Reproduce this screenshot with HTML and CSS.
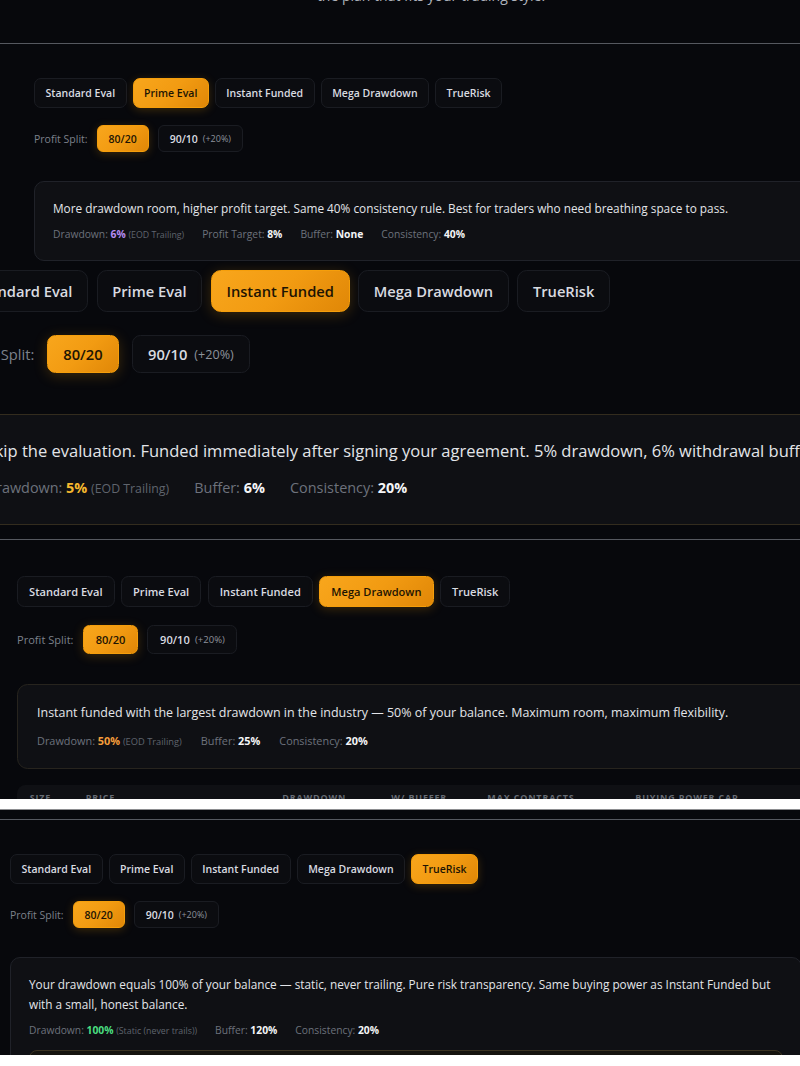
FILE: index.html
```html
<!DOCTYPE html>
<html lang="en">
<head>
<meta charset="utf-8">
<title>Plans</title>
<link rel="stylesheet" href="styles.css">
</head>
<body>
<main class="collage">

  <section class="shot shot-a">
    <p class="intro">the plan that fits your trading style.</p>
    <div class="plans plans-a">
      <div class="tabs">
        <span class="tab">Standard Eval</span>
        <span class="tab is-active">Prime Eval</span>
        <span class="tab">Instant Funded</span>
        <span class="tab">Mega Drawdown</span>
        <span class="tab">TrueRisk</span>
      </div>
      <div class="split">
        <span class="split-label">Profit Split:</span>
        <span class="chip is-active">80/20</span>
        <span class="chip">90/10 <small>(+20%)</small></span>
      </div>
      <div class="card">
        <p class="card-text">More drawdown room, higher profit target. Same 40% consistency rule. Best for traders who need breathing space to pass.</p>
        <div class="stats">
          <span>Drawdown: <b class="v-purple">6%</b> <small>(EOD Trailing)</small></span>
          <span>Profit Target: <b>8%</b></span>
          <span>Buffer: <b>None</b></span>
          <span>Consistency: <b>40%</b></span>
        </div>
      </div>
    </div>
  </section>

  <section class="shot shot-b">
    <div class="plans plans-b">
      <div class="tabs">
        <span class="tab">Standard Eval</span>
        <span class="tab">Prime Eval</span>
        <span class="tab is-active">Instant Funded</span>
        <span class="tab">Mega Drawdown</span>
        <span class="tab">TrueRisk</span>
      </div>
      <div class="split">
        <span class="split-label">Profit Split:</span>
        <span class="chip is-active">80/20</span>
        <span class="chip">90/10 <small>(+20%)</small></span>
      </div>
      <div class="card card-amber card-wide">
        <p class="card-text">Skip the evaluation. Funded immediately after signing your agreement. 5% drawdown, 6% withdrawal buffer.</p>
        <div class="stats">
          <span>Drawdown: <b class="v-amber">5%</b> <small>(EOD Trailing)</small></span>
          <span>Buffer: <b>6%</b></span>
          <span>Consistency: <b>20%</b></span>
        </div>
      </div>
    </div>
  </section>

  <section class="shot shot-c">
    <div class="plans plans-c">
      <div class="tabs">
        <span class="tab">Standard Eval</span>
        <span class="tab">Prime Eval</span>
        <span class="tab">Instant Funded</span>
        <span class="tab is-active">Mega Drawdown</span>
        <span class="tab">TrueRisk</span>
      </div>
      <div class="split">
        <span class="split-label">Profit Split:</span>
        <span class="chip is-active">80/20</span>
        <span class="chip">90/10 <small>(+20%)</small></span>
      </div>
      <div class="card card-warm">
        <p class="card-text">Instant funded with the largest drawdown in the industry — 50% of your balance. Maximum room, maximum flexibility.</p>
        <div class="stats">
          <span>Drawdown: <b class="v-orange">50%</b> <small>(EOD Trailing)</small></span>
          <span>Buffer: <b>25%</b></span>
          <span>Consistency: <b>20%</b></span>
        </div>
      </div>
      <div class="table-head">
        <span>Size</span>
        <span>Price</span>
        <span>Drawdown</span>
        <span>W/ Buffer</span>
        <span>Max Contracts</span>
        <span>Buying Power Cap</span>
      </div>
    </div>
  </section>

  <div class="band"></div>

  <section class="shot shot-d">
    <div class="plans plans-d">
      <div class="tabs">
        <span class="tab">Standard Eval</span>
        <span class="tab">Prime Eval</span>
        <span class="tab">Instant Funded</span>
        <span class="tab">Mega Drawdown</span>
        <span class="tab is-active">TrueRisk</span>
      </div>
      <div class="split">
        <span class="split-label">Profit Split:</span>
        <span class="chip is-active">80/20</span>
        <span class="chip">90/10 <small>(+20%)</small></span>
      </div>
      <div class="card card-d">
        <p class="card-text">Your drawdown equals 100% of your balance — static, never trailing. Pure risk transparency. Same buying power as Instant Funded but with a small, honest balance.</p>
        <div class="stats">
          <span>Drawdown: <b class="v-green">100%</b> <small>(Static (never trails))</small></span>
          <span>Buffer: <b>120%</b></span>
          <span>Consistency: <b>20%</b></span>
        </div>
        <div class="note"></div>
      </div>
    </div>
  </section>

</main>
</body>
</html>
```

FILE: styles.css
```css
* { box-sizing: border-box; }

html, body {
  margin: 0;
  padding: 0;
  background: #ffffff;
}

body {
  font-family: "Open Sans", "Noto Sans", "DejaVu Sans", sans-serif;
  width: 800px;
  height: 1066px;
  overflow: hidden;
}

.collage {
  display: flex;
  flex-direction: column;
}

.shot {
  background: #07080c;
  overflow: hidden;
  flex: none;
}

.shot-a { height: 262px; }
.shot-b { height: 277px; }
.shot-c { height: 260px; border-top: 1px solid #55585f; }
.shot-d {
  height: 245px;
  background:
    linear-gradient(#55585f, #55585f) 0 9px / 100% 1px no-repeat,
    #07080c;
}

.band {
  height: 11px;
  background: #ffffff;
  border-bottom: 1px solid #8c8d90;
  flex: none;
}

.intro {
  margin: -14px 0 0;
  padding: 0 0 37px 62px;
  line-height: 20px;
  font-size: 14px;
  text-align: center;
  color: #aeb3bc;
  border-bottom: 1px solid #55585f;
}

.plans {
  width: 1100px;
}

.plans-a { padding: 34px 0 0 34px; }

.plans-b {
  zoom: 1.4;
  padding-top: 5.4px;
  margin-left: -29px;
}

.plans-c {
  zoom: 1.057;
  padding: 33.6px 0 0 16.1px;
}

.plans-d { padding: 44px 0 0 10px; }

.tabs {
  display: flex;
  gap: 6px;
}

.tab {
  height: 30px;
  padding: 0 10.5px;
  display: flex;
  align-items: center;
  border: 1px solid #1a1c22;
  background: #0b0c10;
  border-radius: 7px;
  font-size: 10.5px;
  font-weight: 600;
  color: #d9dbe0;
  white-space: nowrap;
}

.tab.is-active,
.chip.is-active {
  background: linear-gradient(135deg, #f8a61c 0%, #f29b12 50%, #e08707 100%);
  border-color: #f59e0b;
  color: #1d1403;
  box-shadow: 0 2px 10px rgba(245, 158, 11, 0.22);
}

.split {
  display: flex;
  align-items: center;
  gap: 9px;
  margin-top: 17px;
}

.split-label {
  font-size: 10.5px;
  color: #7c818b;
}

.chip {
  height: 27px;
  padding: 0 11px;
  display: flex;
  align-items: center;
  gap: 5px;
  border: 1px solid #1a1c22;
  background: #0b0c10;
  border-radius: 6px;
  font-size: 10.5px;
  font-weight: 600;
  color: #d9dbe0;
  white-space: nowrap;
}

.chip small {
  font-size: 9px;
  font-weight: 400;
  color: #8d929b;
}

.card {
  margin-top: 29px;
  width: 783px;
  padding: 16px 18px;
  border: 1px solid #202229;
  background: #0f1014;
  border-radius: 10px;
}

.card-d { width: 792px; }
.card-wide { width: 900px; }

.card-amber { border-color: #332c1e; }
.card-warm { border-color: #27241e; }

.card-text {
  margin: 0;
  font-size: 11.8px;
  line-height: 20px;
  color: #e3e5e9;
}

.card-wide .card-text { white-space: nowrap; }

.stats {
  display: flex;
  gap: 18px;
  margin-top: 8px;
  font-size: 10.3px;
  line-height: 17px;
  color: #6d727c;
  white-space: nowrap;
}

.stats b {
  font-weight: 700;
  color: #f4f5f7;
}

.stats small {
  font-size: 8.8px;
  color: #5f646d;
}

.stats .v-purple { color: #b48cf2; }
.stats .v-amber { color: #f5b82e; }
.stats .v-orange { color: #f59e3b; }
.stats .v-green { color: #4ade80; }

.table-head {
  margin-top: 15px;
  width: 900px;
  height: 40px;
  padding: 6px 0 0 12px;
  display: grid;
  grid-template-columns: 53px 186px 103px 91px 140px auto;
  background: #0f1014;
  border-radius: 8px 8px 0 0;
  font-size: 8.5px;
  font-weight: 700;
  letter-spacing: 0.8px;
  text-transform: uppercase;
  color: #676c75;
}

.note {
  margin-top: 10px;
  height: 40px;
  border: 1px solid #3a3220;
  background: #15130e;
  border-radius: 8px;
}
```
